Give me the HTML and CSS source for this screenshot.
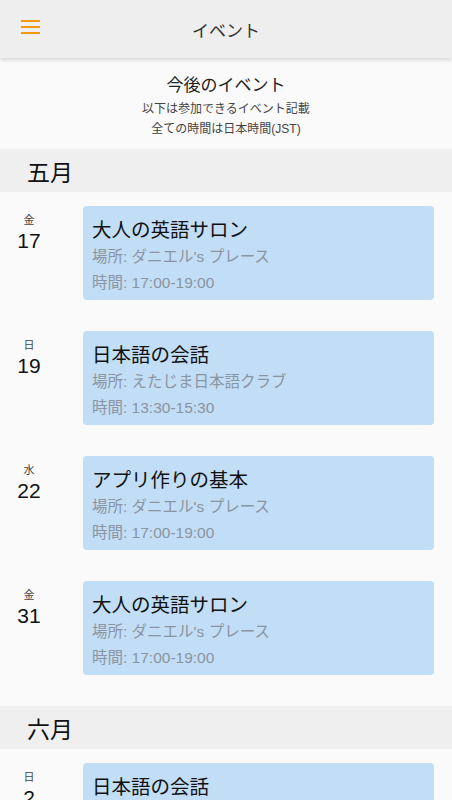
FILE: index.html
```html
<!DOCTYPE html>
<html lang="ja">
<head>
    <meta charset="UTF-8">
    <meta name="viewport" content="width=device-width, initial-scale=1.0">
    <title>イベント</title>
    <link rel="stylesheet" href="styles.css">
</head>
<body>

<header class="topbar">
    <div class="menu-btn">
        <span></span><span></span><span></span>
    </div>
    <h1>イベント</h1>
</header>

<div class="intro">
    <h2>今後のイベント</h2>
    <p>以下は参加できるイベント記載</p>
    <p>全ての時間は日本時間(JST)</p>
</div>

<div class="month">五月</div>

<div class="event">
    <div class="date"><span class="dow">金</span><span class="day">17</span></div>
    <div class="card">
        <div class="title">大人の英語サロン</div>
        <div class="info">場所: ダニエル's プレース</div>
        <div class="info">時間: 17:00-19:00</div>
    </div>
</div>

<div class="event">
    <div class="date"><span class="dow">日</span><span class="day">19</span></div>
    <div class="card">
        <div class="title">日本語の会話</div>
        <div class="info">場所: えたじま日本語クラブ</div>
        <div class="info">時間: 13:30-15:30</div>
    </div>
</div>

<div class="event">
    <div class="date"><span class="dow">水</span><span class="day">22</span></div>
    <div class="card">
        <div class="title">アプリ作りの基本</div>
        <div class="info">場所: ダニエル's プレース</div>
        <div class="info">時間: 17:00-19:00</div>
    </div>
</div>

<div class="event last">
    <div class="date"><span class="dow">金</span><span class="day">31</span></div>
    <div class="card">
        <div class="title">大人の英語サロン</div>
        <div class="info">場所: ダニエル's プレース</div>
        <div class="info">時間: 17:00-19:00</div>
    </div>
</div>

<div class="month">六月</div>

<div class="event">
    <div class="date"><span class="dow">日</span><span class="day">2</span></div>
    <div class="card">
        <div class="title">日本語の会話</div>
        <div class="info">場所: えたじま日本語クラブ</div>
        <div class="info">時間: 13:30-15:30</div>
    </div>
</div>

</body>
</html>
```

FILE: styles.css
```css
body {
    font-family: "Liberation Sans", "Noto Sans CJK JP", sans-serif;
    background-color: #fafafa;
    color: #222;
    margin: 0;
    padding: 0;
}
.topbar {
    position: relative;
    height: 58px;
    background-color: #eeeeee;
    box-shadow: 0 2px 4px rgba(0, 0, 0, 0.15);
    display: flex;
    align-items: center;
    justify-content: center;
}
.topbar h1 {
    margin: 0;
    font-size: 17px;
    font-weight: normal;
    color: #333;
}
.menu-btn {
    position: absolute;
    left: 21px;
    top: 20px;
    width: 19px;
    display: flex;
    flex-direction: column;
    gap: 4px;
}
.menu-btn span {
    display: block;
    height: 2px;
    background-color: #f7960f;
}
.intro {
    height: 91px;
    box-sizing: border-box;
    padding-top: 16px;
    text-align: center;
}
.intro h2 {
    margin: 0 0 1px;
    font-size: 17px;
    font-weight: normal;
    line-height: 24px;
    color: #222;
}
.intro p {
    margin: 0;
    font-size: 12px;
    line-height: 20px;
    color: #444;
}
.month {
    height: 43px;
    background-color: #efefef;
    padding-left: 27px;
    font-size: 23px;
    line-height: 49px;
    color: #111;
}
.event {
    display: flex;
    padding: 14px 18px 17px 0;
}
.event.last {
    padding-bottom: 31px;
}
.date {
    width: 83px;
    flex-shrink: 0;
    display: flex;
    flex-direction: column;
    align-items: center;
    padding-right: 25px;
    box-sizing: border-box;
    padding-top: 7px;
}
.dow {
    font-size: 11px;
    line-height: 15px;
    color: #444;
}
.day {
    font-size: 21px;
    line-height: 26px;
    color: #111;
}
.card {
    flex: 1;
    height: 94px;
    box-sizing: border-box;
    background-color: #c2ddf6;
    border-radius: 4px;
    padding: 11px 9px 0;
}
.card .title {
    font-size: 19.5px;
    line-height: 26px;
    color: #111;
}
.card .info {
    font-size: 15.5px;
    line-height: 25px;
    padding-top: 1px;
    color: #8a95a2;
}
```
